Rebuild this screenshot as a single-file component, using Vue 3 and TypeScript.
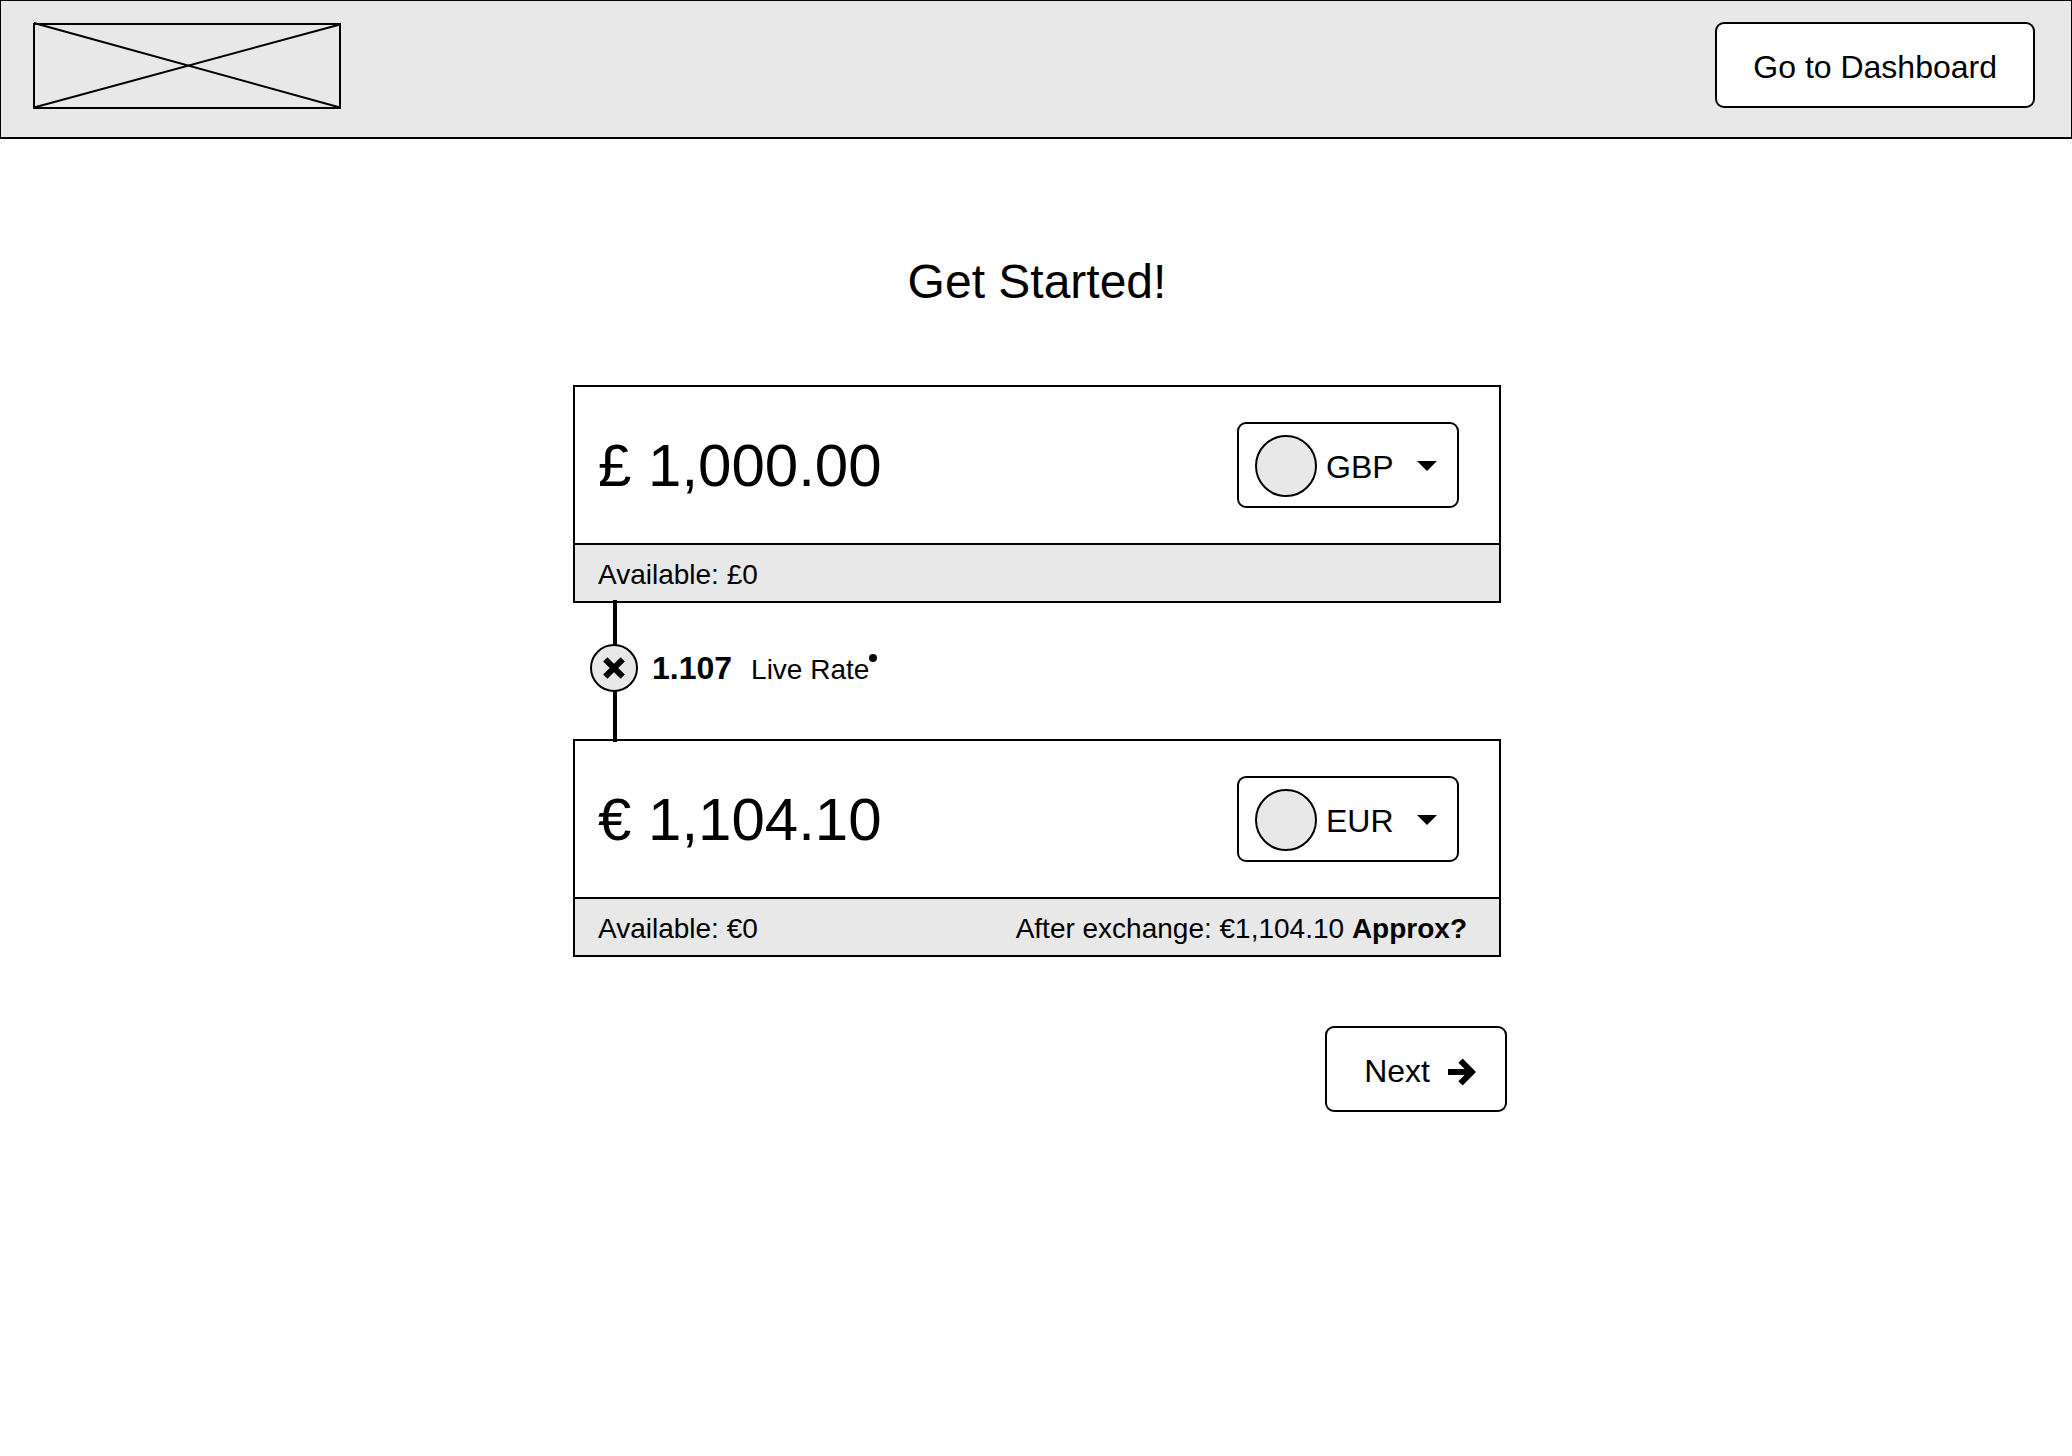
<script setup lang="ts">
import { ref } from 'vue'

interface Wallet {
  id: string
  label: string
  amount: string
  currency: string
  available: string
  after?: string
}

const currencies: string[] = ['GBP', 'EUR']

const source = ref<Wallet>({
  id: 'source',
  label: 'Amount to exchange',
  amount: '£ 1,000.00',
  currency: 'GBP',
  available: 'Available: £0',
})

const target = ref<Wallet>({
  id: 'target',
  label: 'Amount received',
  amount: '€ 1,104.10',
  currency: 'EUR',
  available: 'Available: €0',
  after: 'After exchange: €1,104.10',
})

const wallets = [source, target]
</script>

<template>
  <div class="page">
    <header class="topbar">
      <svg class="logo" viewBox="0 0 308 88" aria-hidden="true">
        <rect x="1" y="2" width="306" height="84" />
        <path d="M1 1L307 85.500M1 85.500L307 2.500" />
      </svg>
      <button type="button" class="button">Go to Dashboard</button>
    </header>

    <main class="content">
      <h1 class="title">Get Started!</h1>

      <form class="exchange" @submit.prevent>
        <template v-for="(wallet, index) in wallets" :key="wallet.value.id">
          <div v-if="index === 1" class="rate">
            <span class="connector"></span>
            <svg class="times" viewBox="0 0 48 48" aria-hidden="true">
              <circle cx="24" cy="24" r="23" />
              <path d="M15.300 15.300L32.700 32.700M32.700 15.300L15.300 32.700" />
            </svg>
            <div class="rate-text">
              <strong class="rate-value">1.107</strong>
              <span class="rate-label">Live Rate</span>
              <span class="live-dot"></span>
            </div>
          </div>

          <section class="card">
            <div class="card-main">
              <input
                v-model="wallet.value.amount"
                class="amount"
                type="text"
                :aria-label="wallet.value.label"
              />
              <label class="picker">
                <select v-model="wallet.value.currency" class="picker-select" aria-label="Currency">
                  <option v-for="code in currencies" :key="code" :value="code">{{ code }}</option>
                </select>
                <span class="flag"></span>
                <svg class="caret" viewBox="0 0 20 10" aria-hidden="true">
                  <path d="M0 0H20L10 10Z" />
                </svg>
              </label>
            </div>
            <div class="card-foot">
              <span>{{ wallet.value.available }}</span>
              <span v-if="wallet.value.after">{{ wallet.value.after }} <strong>Approx?</strong></span>
            </div>
          </section>
        </template>

        <button type="submit" class="button next">
          Next
          <svg class="arrow" viewBox="0 0 28 28" aria-hidden="true">
            <path d="M0 14H22M12.500 2.700L23.800 14L12.500 25.300" />
          </svg>
        </button>
      </form>
    </main>
  </div>
</template>

<style>
body {
  margin: 0;
  background: #fff;
}
</style>

<style scoped>
.page {
  color: #000;
  font-family: "Liberation Sans", Arial, sans-serif;
  font-size: 28px;
}

.topbar {
  display: flex;
  justify-content: space-between;
  align-items: flex-start;
  box-sizing: border-box;
  padding: 21px 36px 27px 32px;
  border: 1px solid #000;
  border-bottom-width: 2px;
  background: #e8e8e8;
}

.logo {
  display: block;
  width: 308px;
  height: 88px;
  fill: none;
  stroke: #000;
  stroke-width: 2;
}

.button {
  display: flex;
  align-items: center;
  box-sizing: border-box;
  height: 86px;
  padding: 3px 36px 0;
  border: 2px solid #000;
  border-radius: 9px;
  background: #fff;
  color: #000;
  font-family: inherit;
  font-size: 32px;
  line-height: 36px;
  cursor: pointer;
}

.content {
  display: flex;
  flex-direction: column;
  align-items: center;
  padding: 115px 0 0 2px;
}

.title {
  margin: 0 0 75px;
  font-size: 48px;
  font-weight: 400;
  line-height: 56px;
}

.exchange {
  display: flex;
  flex-direction: column;
  width: 100%;
  max-width: 928px;
}

.card {
  border: 2px solid #000;
}

.card-main {
  display: flex;
  justify-content: space-between;
  align-items: center;
  height: 156px;
  padding: 0 40px 0 23px;
  background: #fff;
}

.amount {
  flex: 1;
  min-width: 0;
  padding: 2px 0 0;
  border: 0;
  outline: none;
  background: transparent;
  color: #000;
  font-family: inherit;
  font-size: 60px;
  line-height: 68px;
}

.picker {
  display: grid;
  align-items: center;
  width: 222px;
}

.picker > * {
  grid-area: 1 / 1;
}

.picker-select {
  appearance: none;
  box-sizing: border-box;
  width: 100%;
  height: 86px;
  padding: 3px 60px 0 87px;
  border: 2px solid #000;
  border-radius: 9px;
  background: #fff;
  color: #000;
  font-family: inherit;
  font-size: 32px;
}

.flag {
  box-sizing: border-box;
  width: 62px;
  height: 62px;
  margin: 2px 0 0 18px;
  border: 2px solid #000;
  border-radius: 50%;
  background: #e8e8e8;
  pointer-events: none;
}

.caret {
  justify-self: end;
  width: 20px;
  height: 10px;
  margin: 2px 22px 0 0;
  pointer-events: none;
}

.card-foot {
  display: flex;
  justify-content: space-between;
  padding: 4px 32px 0 23px;
  border-top: 2px solid #000;
  background: #e8e8e8;
  line-height: 52px;
}

.rate {
  position: relative;
  display: flex;
  align-items: center;
  box-sizing: border-box;
  height: 136px;
  padding: 0 0 6px 17px;
}

.connector {
  position: absolute;
  top: -3px;
  bottom: -3px;
  left: 40px;
  width: 4px;
  background: #000;
}

.times {
  position: relative;
  width: 48px;
  height: 48px;
  fill: #e8e8e8;
  stroke: #000;
  stroke-width: 2;
}

.times path {
  stroke-width: 6;
}

.rate-text {
  display: flex;
  align-items: baseline;
  margin: 2px 0 0 14px;
  line-height: 36px;
}

.rate-value {
  font-size: 32px;
}

.rate-label {
  margin-left: 19px;
}

.live-dot {
  align-self: flex-start;
  width: 8px;
  height: 8px;
  margin-top: 4px;
  border-radius: 50%;
  background: #000;
}

.next {
  align-self: flex-end;
  gap: 18px;
  margin: 69px -6px 0 0;
  padding: 3px 29px 0 37px;
}

.arrow {
  width: 28px;
  height: 28px;
  margin-top: 2px;
  fill: none;
  stroke: #000;
  stroke-width: 6;
}
</style>
